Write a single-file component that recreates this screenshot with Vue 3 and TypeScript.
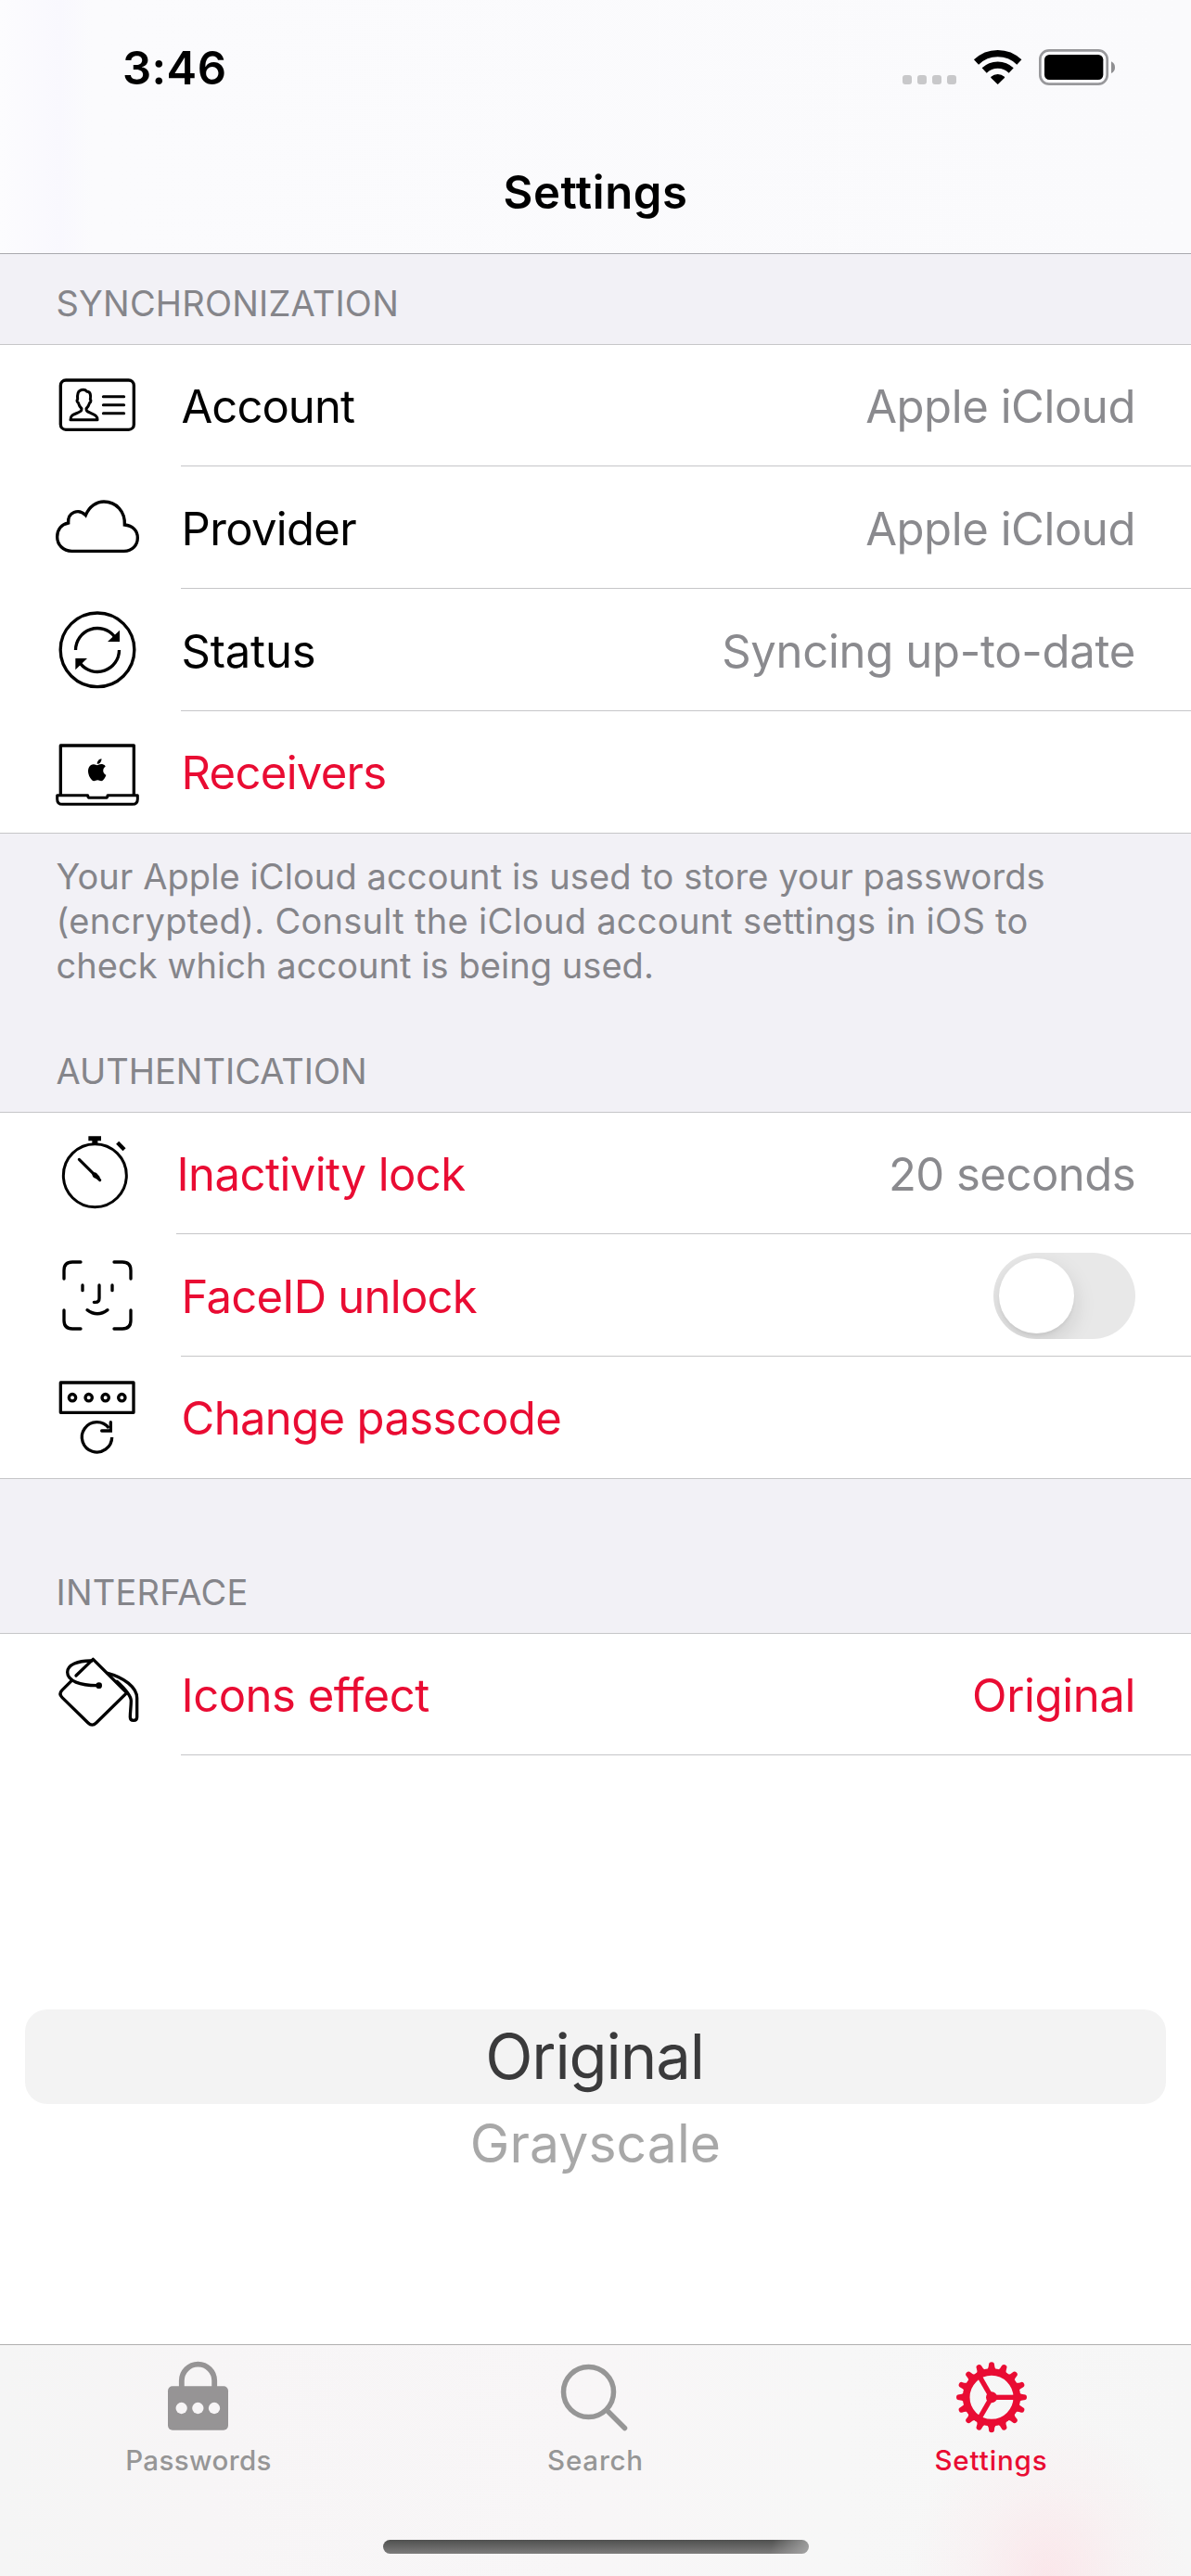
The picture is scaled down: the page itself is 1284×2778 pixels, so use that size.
<script setup lang="ts">
interface Row {
  id: string
  label: string
  track: number
  view: string
  value?: string
  valueTrack?: number
  red?: boolean
  toggle?: boolean
}
interface Section {
  id: string
  title: string
  track: number
  rows: Row[]
  note?: { text: string; track: number }[]
}

const sections: Section[] = [
  {
    id: 'sync',
    title: 'SYNCHRONIZATION',
    track: 0.2,
    rows: [
      { id: 'account', label: 'Account', track: -0.95, view: '60 -24 270 393', value: 'Apple iCloud', valueTrack: -0.42 },
      { id: 'provider', label: 'Provider', track: -0.65, view: '60 369 270 396', value: 'Apple iCloud', valueTrack: -0.42 },
      { id: 'status', label: 'Status', track: -0.2, view: '60 -15 270 396', value: 'Syncing up-to-date', valueTrack: -0.3 },
      { id: 'receivers', label: 'Receivers', track: -0.7, view: '60 381 270 396', red: true },
    ],
    note: [
      { text: 'Your Apple iCloud account is used to store your passwords', track: 0.1 },
      { text: '(encrypted). Consult the iCloud account settings in iOS to', track: 0.28 },
      { text: 'check which account is being used.', track: 0.05 },
    ],
  },
  {
    id: 'auth',
    title: 'AUTHENTICATION',
    track: 0,
    rows: [
      { id: 'inactivity', label: 'Inactivity lock', track: -0.55, view: '60 0 270 393', value: '20 seconds', valueTrack: -0.52, red: true },
      { id: 'faceid', label: 'FaceID unlock', track: -0.75, view: '60 393 270 396', red: true, toggle: true },
      { id: 'passcode', label: 'Change passcode', track: -0.65, view: '60 789 270 396', red: true },
    ],
  },
  {
    id: 'ui',
    title: 'INTERFACE',
    track: 0.2,
    rows: [
      { id: 'effect', label: 'Icons effect', track: -0.5, view: '60 6 270 393', value: 'Original', valueTrack: -0.36, red: true },
    ],
  },
]

const teeth = Array.from({ length: 16 }, (_, i) => i * 22.5)
const digits = [114, 167, 221, 274]
</script>

<template>
  <div class="screen">
    <header class="top">
      <div class="statusbar">
        <span class="time">3:46</span>
        <svg class="indicators" viewBox="0 0 900 270">
          <g fill="#c8c8ca">
            <rect v-for="x in [99, 147, 195, 243]" :key="x" :x="x" y="153" width="30" height="30" rx="9" />
          </g>
          <g fill="none" stroke="#000" stroke-width="22">
            <path d="M337.5 111A100 100 0 0 1 476.5 111" />
            <path d="M363.5 138A62.5 62.5 0 0 1 450.5 138" />
          </g>
          <path d="M407 180L387 160A30 30 0 0 1 427 160Z" stroke="#000" stroke-width="5" stroke-linejoin="round" />
          <rect x="544" y="73" width="217" height="109" rx="29" fill="none" stroke="#98989b" stroke-width="8" />
          <rect x="558" y="87" width="190" height="81" rx="16" />
          <path d="M774 109Q786 115 786 128T774 147Z" fill="#8f8f92" />
        </svg>
      </div>
      <h1 class="title">Settings</h1>
    </header>

    <main class="content">
      <section v-for="s in sections" :key="s.id" :class="['section', s.id]">
        <h2 class="heading" :style="{ letterSpacing: s.track + 'px' }">{{ s.title }}</h2>
        <div class="rows">
          <div v-for="r in s.rows" :key="r.id" :class="['row', 'row-' + r.id]">
            <svg class="icon" :viewBox="r.view" fill="none" stroke="#000" stroke-width="10">
              <template v-if="r.id === 'account'">
                <rect x="76" y="90" width="237" height="160" rx="17" />
                <path stroke-linecap="round" d="M214 143H281M214 170H281M214 197H281" stroke-width="9" />
                <path stroke-linejoin="round" stroke-width="9" d="M108 218C108 204 117 201 130 196C142 191 144 189 144 182C138 176 135 170 133 163C128 160 128 154 131 152C130 140 129 121 150 121C156 121 159 124 162 127C173 127 174 140 172 152C175 155 174 161 170 163C168 170 164 177 159 182C159 190 162 191 173 196C186 202 195 205 195 218Z" />
              </template>
              <path v-else-if="r.id === 'provider'" d="M112 643C84 643 65 622 65 597C65 572 80 556 101 552C98 518 134 503 157 527C169 498 193 483 216 483C256 483 285 515 283 558C309 560 325 577 325 600C325 624 308 643 281 643Z" />
              <template v-else-if="r.id === 'status'">
                <circle cx="195" cy="182.500" r="119.500" />
                <path d="M124.500 183A70.500 70.500 0 0 1 250 139M265.500 183A70.500 70.500 0 0 1 140 227" />
                <path d="M267 119V156H228ZM124 247V210H162Z" fill="#000" stroke="none" />
              </template>
              <template v-else-if="r.id === 'receivers'">
                <path d="M76 652V492H313V652" stroke-linejoin="round" />
                <path stroke-linejoin="round" stroke-width="9" d="M65 653H164Q164 661 171 661H221Q228 661 228 653H325V665Q325 682 308 682H82Q65 682 65 665Z" />
                <path transform="translate(158.400 535) scale(2.980)" fill="#000" stroke="none" d="M12.152 6.896c-.948 0-2.415-1.078-3.96-1.04-2.04.027-3.91 1.183-4.961 3.014-2.117 3.675-.546 9.103 1.519 12.09 1.013 1.454 2.208 3.09 3.792 3.039 1.52-.065 2.09-.987 3.935-.987 1.831 0 2.35.987 3.96.948 1.637-.026 2.676-1.48 3.676-2.948 1.156-1.688 1.636-3.325 1.662-3.415-.039-.013-3.182-1.221-3.22-4.857-.026-3.04 2.48-4.494 2.597-4.559-1.429-2.09-3.623-2.324-4.39-2.376-2-.156-3.675 1.09-4.61 1.09zM15.53 3.83c.843-1.012 1.4-2.427 1.245-3.83-1.207.052-2.662.805-3.532 1.818-.78.896-1.454 2.338-1.273 3.714 1.338.104 2.715-.688 3.559-1.701" />
              </template>
              <template v-else-if="r.id === 'inactivity'">
                <circle cx="187" cy="203" r="102" stroke-width="9" />
                <path d="M166 76H207V91H196V101H178V91H166Z" fill="#000" stroke="none" />
                <path d="M260 97L282 119" stroke-width="13" />
                <path d="M136 151L203 218" stroke-width="9" stroke-linecap="round" />
                <path d="M178 198Q184 190 192 195L202 206L206 221L190 213Q178 210 178 198Z" fill="#000" stroke="none" />
              </template>
              <g v-else-if="r.id === 'faceid'" stroke-linecap="round">
                <path d="M87 537V510Q87 483 114 483H141M249 483H276Q303 483 303 510V537M303 639V672Q303 699 276 699H249M141 699H114Q87 699 87 672V639" />
                <path d="M147 558V575M243 558V575M201 558V600Q201 613 189 613H184M162 638Q195 663 228 638" />
              </g>
              <template v-else-if="r.id === 'passcode'">
                <rect x="76" y="873" width="236" height="97" stroke-linejoin="round" />
                <circle v-for="x in digits" :key="x" :cx="x" cy="921.500" r="11" />
                <path d="M242 1050A48.500 48.500 0 1 1 232 1020" />
                <path d="M238 1001V1029H209" stroke-linecap="round" />
              </template>
              <g v-else-if="r.id === 'effect'" stroke-linecap="round" stroke-linejoin="round">
                <path d="M126 141L181 88L290 197L191 294Q178 307 165 294L81 212Q69 200 81 188L112 157" />
                <path d="M177 93C132 92 98 106 98 130C98 158 138 174 199 173M228 133C280 147 323 178 323 214V275Q323 286 312 286Q301 286 301 275C301 258 304 240 304 222C303 203 280 180 258 160" />
                <circle cx="200" cy="173" r="6" fill="#000" stroke-width="8" />
              </g>
            </svg>
            <div class="body">
              <span :class="['label', { red: r.red }]" :style="{ letterSpacing: r.track + 'px' }">{{ r.label }}</span>
              <span v-if="r.value" :class="['value', { red: r.id === 'effect' }]" :style="{ letterSpacing: r.valueTrack + 'px' }">{{ r.value }}</span>
              <span v-if="r.toggle" class="toggle"><i class="knob"></i></span>
            </div>
          </div>
        </div>
        <p v-if="s.note" class="note">
          <span v-for="n in s.note" :key="n.text" :style="{ letterSpacing: n.track + 'px' }">{{ n.text }}</span>
        </p>
      </section>
      <div class="picker">
        <div class="choice selected">Original</div>
        <div class="choice next">Grayscale</div>
      </div>
    </main>

    <nav class="tabs">
      <div class="tab tab-passwords">
        <svg class="tabicon" viewBox="0 0 360 330" fill="none" stroke="#969495">
          <path d="M107.500 165V142A53 53 0 0 1 213.500 142V165" stroke-width="17.500" />
          <rect x="63" y="160" width="195" height="142" rx="15" fill="#969495" stroke="none" />
          <circle v-for="x in [107, 160, 213]" :key="x" :cx="x" cy="231" r="18.500" fill="#f7f5f6" stroke="none" />
        </svg>
        <span>Passwords</span>
      </div>
      <div class="tab tab-search">
        <svg class="tabicon" viewBox="0 0 120 110" fill="none" stroke="#969696" stroke-width="5.500">
          <circle cx="52.500" cy="59.500" r="27" />
          <path d="M72.500 79.500L91.500 98.500" stroke-linecap="round" />
        </svg>
        <span>Search</span>
      </div>
      <div class="tab tab-settings">
        <svg class="tabicon" viewBox="25 0 360 330" fill="none" stroke="#e90c33">
          <g transform="translate(205 196)">
            <circle r="82" stroke-width="23" />
            <path v-for="a in teeth" :key="a" :transform="`rotate(${a})`" d="M-15 -88Q-9 -96 -9 -105A9 9 0 0 1 9 -105Q9 -96 15 -88Z" fill="#e90c33" stroke="none" />
            <path v-for="a in [0, 120, 240]" :key="a" :transform="`rotate(${a})`" d="M0 0H76" stroke-width="16" />
            <circle r="18" fill="#e90c33" stroke="none" />
          </g>
        </svg>
        <span>Settings</span>
      </div>
      <div class="home"></div>
    </nav>
  </div>
</template>

<style>
body {
  margin: 0;
}
</style>

<style scoped>
.screen {
  width: 1284px;
  height: 2778px;
  display: flex;
  flex-direction: column;
  overflow: hidden;
  background: #fff;
  color: #000;
  font-family: "Inter", "Liberation Sans", sans-serif;
}
.top {
  box-sizing: border-box;
  height: 274px;
  flex: none;
  border-bottom: 1px solid #a9a9ae;
  background: linear-gradient(90deg, #fcfcfe 0, #f9f8fe 65px, #fbfbfd 100px, #fafafc 100%);
}
.statusbar {
  display: flex;
  justify-content: space-between;
  padding: 30px 44px 0 132px;
  height: 90px;
}
.time {
  font-size: 49px;
  font-weight: 600;
  line-height: 60px;
  padding-top: 14px;
  letter-spacing: 0.4px;
}
.indicators {
  width: 300px;
  height: 90px;
}
.title {
  margin: 58px 0 0;
  font-size: 49px;
  font-weight: 600;
  line-height: 60px;
  letter-spacing: 0.6px;
  text-align: center;
}
.content {
  flex: 1;
}
.section {
  background: #f2f1f6;
}
.heading {
  box-sizing: border-box;
  margin: 0;
  padding: 0 60.5px 16px;
  display: flex;
  align-items: flex-end;
  font-size: 38px;
  font-weight: 400;
  line-height: 56px;
  color: #85858a;
}
.sync .heading { height: 97px; }
.auth .heading { height: 132px; }
.ui .heading { height: 166px; }
.rows {
  background: #fff;
  border-top: 1px solid #c6c6c8;
  border-bottom: 1px solid #c6c6c8;
}
.ui .rows {
  border-bottom: 0;
}
.row {
  display: flex;
  height: 132px;
  padding-left: 60px;
}
.row:first-child {
  height: 131px;
}
.row:last-child {
  height: 131px;
}
.icon {
  flex: none;
  width: 90px;
  height: 132px;
  margin-right: 45px;
}
.row:first-child .icon {
  height: 131px;
}
.row-inactivity .icon {
  margin-right: 40px;
}
.body {
  flex: 1;
  display: flex;
  align-items: center;
  justify-content: space-between;
  padding: 4px 60px 0 0.5px;
  border-bottom: 1px solid #c6c6c8;
  font-size: 49px;
  line-height: 60px;
}
.row:first-child .body {
  padding-top: 3px;
}
.row:last-child .body {
  border-bottom-color: transparent;
}
.ui .row .body {
  border-bottom-color: #c6c6c8;
}
.label,
.value {
  white-space: pre;
}
.value {
  color: #8a8a8e;
}
.label.red,
.value.red {
  color: #e90c33;
}
.toggle {
  box-sizing: border-box;
  width: 153px;
  height: 93px;
  margin-top: -2px;
  padding: 6px;
  border-radius: 47px;
  background: #e8e8e8;
  overflow: hidden;
}
.knob {
  display: block;
  width: 81px;
  height: 81px;
  border-radius: 50%;
  background: #fff;
  box-shadow: 0 9px 24px rgba(0, 0, 0, 0.13), 0 3px 3px rgba(0, 0, 0, 0.04);
}
.note {
  box-sizing: border-box;
  height: 168px;
  margin: 0;
  padding: 22px 60.5px 0;
  display: flex;
  flex-direction: column;
  font-size: 38px;
  line-height: 48px;
  color: #85858a;
  white-space: pre;
}
.picker {
  padding: 274px 27px 0;
  text-align: center;
}
.choice {
  white-space: pre;
}
.selected {
  box-sizing: border-box;
  height: 102px;
  padding-right: 2px;
  border-radius: 24px;
  background: #f3f3f3;
  color: #3a3a3b;
  font-size: 67px;
  letter-spacing: -1.1px;
  line-height: 102px;
}
.next {
  color: #a8a8a8;
  font-size: 57px;
  line-height: 85px;
  letter-spacing: 0.1px;
}
.tabs {
  position: relative;
  box-sizing: border-box;
  flex: none;
  height: 250px;
  display: flex;
  border-top: 1px solid #b1afb0;
  background:
    radial-gradient(ellipse 150px 175px at 1130px 250px, rgba(253, 220, 226, 0.6), rgba(253, 225, 230, 0.22) 55%, rgba(253, 225, 230, 0) 100%),
    linear-gradient(90deg, #f5f5f5 0, #f7f5f6 220px, #f8f6f7 640px, #f7f7f7 900px, #f6f6f6 100%);
}
.tab {
  box-sizing: border-box;
  flex: none;
  width: 428px;
  display: flex;
  flex-direction: column;
  align-items: center;
  color: #969696;
  font-size: 29.5px;
  font-weight: 500;
  line-height: 36px;
}
.tabicon {
  width: 120px;
  height: 110px;
  margin-top: -9px;
  margin-bottom: 5px;
}
.tab-passwords { letter-spacing: 0.4px; }
.tab-passwords .tabicon { margin-right: -12px; }
.tab-search { letter-spacing: 0.8px; }
.tab-settings {
  padding-right: 3px;
  letter-spacing: 0.9px;
  color: #e90c33;
}
.home {
  position: absolute;
  left: 413px;
  top: 210px;
  width: 459px;
  height: 15px;
  border-radius: 8px;
  background:
    linear-gradient(100deg, rgba(170, 170, 170, 0) 91%, rgba(175, 175, 175, 0.8) 100%),
    linear-gradient(#4f504f, #7d7c7c);
}
</style>
